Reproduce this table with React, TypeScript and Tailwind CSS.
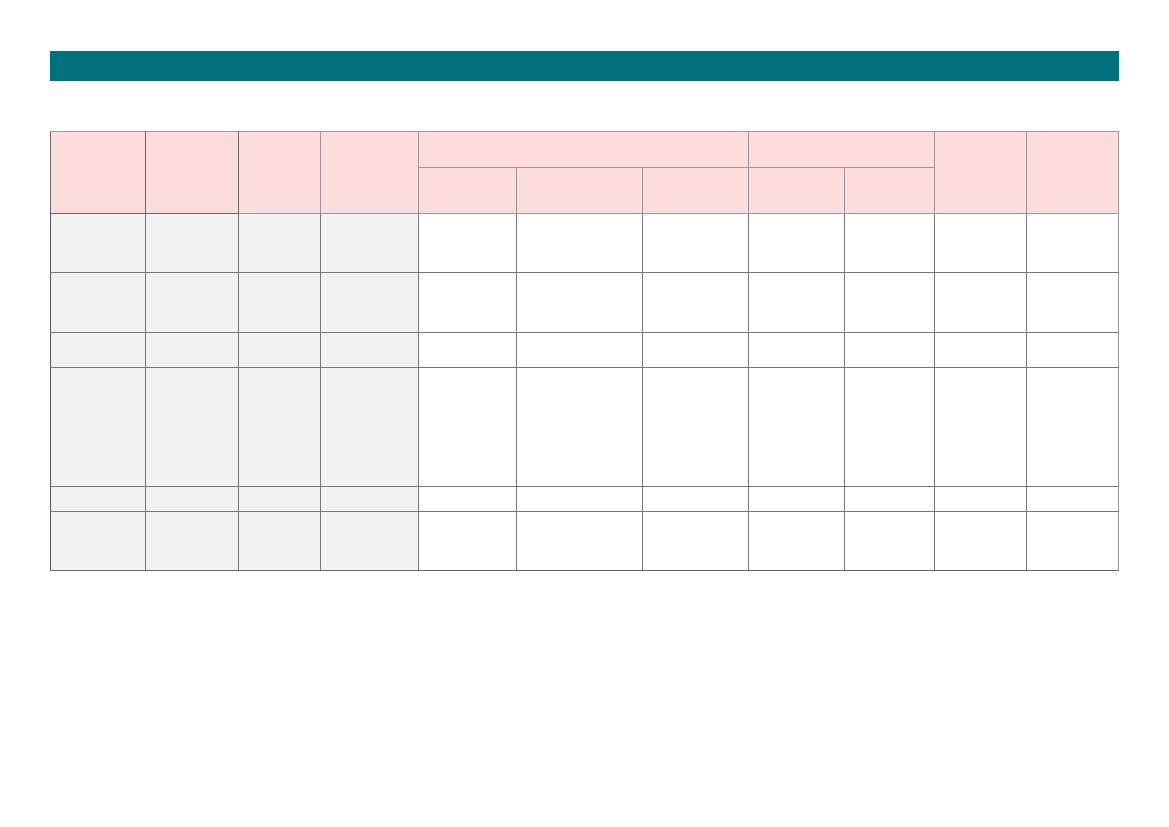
const colWidths = [95, 93, 82, 98, 98, 126, 106, 96, 90, 92, 92];

const bodyRows = [
  { h: 'h-[59px]', line: 'border-t-[#444]' },
  { h: 'h-[60px]', line: 'border-t-[#999]' },
  { h: 'h-[35px]', line: 'border-t-[#555]' },
  { h: 'h-[119px]', line: 'border-t-[#999]' },
  { h: 'h-[25px]', line: 'border-t-[#666]' },
  { h: 'h-[59px]', line: 'border-t-black' },
];

// left edge colour of each body column
const leftLines = [
  'border-l-[#555]',
  'border-l-[#555]',
  'border-l-[#999]',
  'border-l-[#777]',
  'border-l-[#999]',
  'border-l-[#999]',
  'border-l-[#999]',
  'border-l-[#999]',
  'border-l-[#555]',
  'border-l-[#aaa]',
  'border-l-[#999]',
];

export default function App() {
  return (
    <div className="min-h-screen bg-white px-[50px] pt-[51px]">
      <div className="h-[30px] bg-[#00717c]" />

      <table className="mt-[50px] w-[1068px] table-fixed border-collapse">
        <colgroup>
          {colWidths.map((w, i) => (
            <col key={i} style={{ width: w }} />
          ))}
        </colgroup>
        <thead>
          <tr className="h-[36px] bg-[#fddcdc]">
            <th rowSpan={2} className="border border-[#666] border-t-[#999]" />
            <th rowSpan={2} className="border border-[#666] border-t-[#999]" />
            <th rowSpan={2} className="border border-[#999]" />
            <th rowSpan={2} className="border border-[#999]" />
            <th colSpan={3} className="border border-[#999]" />
            <th colSpan={2} className="border border-[#999]" />
            <th rowSpan={2} className="border border-[#999]" />
            <th rowSpan={2} className="border border-[#999]" />
          </tr>
          <tr className="h-[46px] bg-[#fddcdc]">
            <th className="border border-[#999]" />
            <th className="border border-[#999]" />
            <th className="border border-[#999]" />
            <th className="border border-[#999]" />
            <th className="border border-[#999]" />
          </tr>
        </thead>
        <tbody>
          {bodyRows.map((row, r) => (
            <tr key={r} className={row.h}>
              {colWidths.map((_, c) => (
                <td
                  key={c}
                  className={`border border-[#777] ${leftLines[c]} ${row.line} ${
                    c === 10 ? 'border-r-[#999]' : ''
                  } ${r === bodyRows.length - 1 ? 'border-b-[#666]' : ''} ${
                    c < 4 ? 'bg-[#f2f2f2]' : 'bg-white'
                  }`}
                />
              ))}
            </tr>
          ))}
        </tbody>
      </table>
    </div>
  );
}
